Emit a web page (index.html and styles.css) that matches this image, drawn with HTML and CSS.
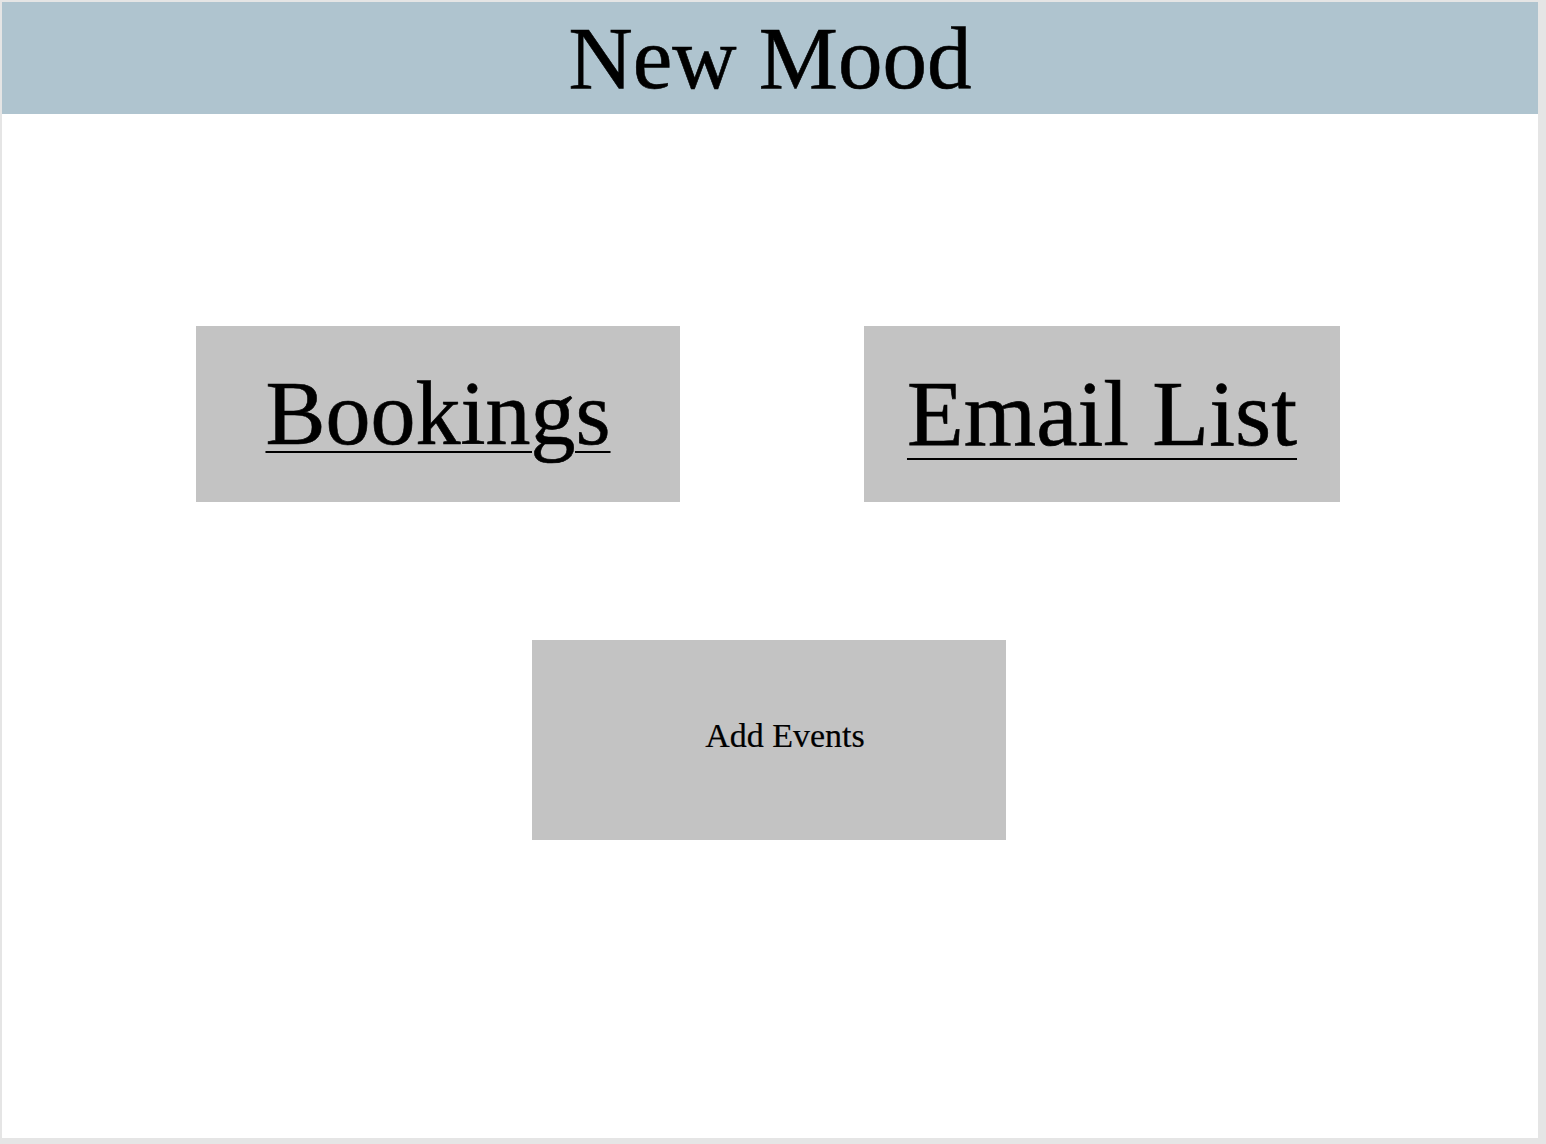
FILE: index.html
```html
<!DOCTYPE html>
<html lang="en">
<head>
<meta charset="utf-8">
<title>New Mood</title>
<link rel="stylesheet" href="styles.css">
</head>
<body>
<div class="frame">
  <header class="header"><h1 class="title">New Mood</h1></header>
  <main class="main">
    <div class="row">
      <a class="tile tile-big tile-bookings" href="#"><span class="link">Bookings</span></a>
      <a class="tile tile-big tile-email" href="#"><span class="link link-email">Email List</span></a>
    </div>
    <div class="row row-center">
      <a class="tile tile-add" href="#"><span class="small">Add Events</span></a>
    </div>
  </main>
</div>
</body>
</html>
```

FILE: styles.css
```css
html, body {
  margin: 0;
  padding: 0;
}
body {
  background: #e5e5e5;
  font-family: "Liberation Serif", "Times New Roman", serif;
  color: #000;
}
.frame {
  margin: 2px 8px 6px 2px;
  height: 1136px;
  background: #ffffff;
  display: flex;
  flex-direction: column;
}
.header {
  height: 112px;
  background: #afc4cf;
  display: flex;
  justify-content: center;
}
.title {
  margin: 0;
  font-size: 89px;
  font-weight: normal;
  line-height: 112px;
  -webkit-text-stroke: 0.6px #000;
}
.main {
  display: flex;
  flex-direction: column;
  padding-top: 212px;
  gap: 138px;
}
.row {
  display: flex;
  gap: 184px;
  padding-left: 194px;
}
.row-center {
  padding-left: 530px;
}
.tile {
  background: #c3c3c3;
  display: flex;
  align-items: center;
  justify-content: center;
  color: #000;
  text-decoration: none;
}
.tile-big {
  height: 176px;
}
.tile-bookings { width: 484px; }
.tile-email { width: 476px; }
.link {
  font-size: 90px;
  line-height: 1.15;
  text-decoration: underline;
  text-decoration-thickness: 2px;
  text-underline-offset: 7px;
  -webkit-text-stroke: 0.6px #000;
}
.link-email {
  font-size: 93px;
  text-underline-offset: 13px;
}
.tile-add {
  width: 474px;
  height: 200px;
  box-sizing: border-box;
  padding: 0 0 8px 32px;
}
.small {
  font-size: 34px;
  -webkit-text-stroke: 0.2px #000;
}
```
